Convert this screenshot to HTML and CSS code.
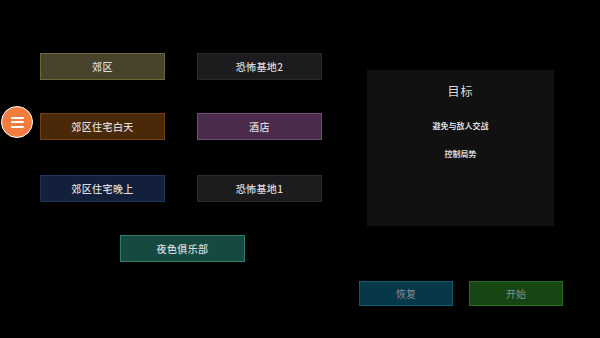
FILE: index.html
```html
<!DOCTYPE html>
<html>

<head>
    <title>选择地图</title>
    <link rel="stylesheet" href="styles.css">
</head>

<body>
    <div class="screen">
        <div class="menu-btn">
            <span></span><span></span><span></span>
        </div>

        <div class="maps">
            <div class="map-grid">
                <div class="map olive">郊区</div>
                <div class="map dark">恐怖基地2</div>
                <div class="map brown">郊区住宅白天</div>
                <div class="map purple">酒店</div>
                <div class="map navy">郊区住宅晚上</div>
                <div class="map dark">恐怖基地1</div>
            </div>
            <div class="map teal club">夜色俱乐部</div>
        </div>

        <div class="side">
            <div class="goal">
                <h3>目标</h3>
                <p>避免与敌人交战</p>
                <p>控制局势</p>
            </div>
            <div class="actions">
                <div class="action restore">恢复</div>
                <div class="action start">开始</div>
            </div>
        </div>
    </div>
</body>

</html>
```

FILE: styles.css
```css
html,
body {
    margin: 0;
    background: #000;
}

.screen {
    position: relative;
    width: 600px;
    height: 338px;
    display: flex;
    font-family: "Noto Sans CJK SC", "Noto Sans", sans-serif;
    color: #dcdcdc;
}

.menu-btn {
    position: absolute;
    left: 1px;
    top: 106px;
    width: 30px;
    height: 30px;
    border: 1.5px solid #fff;
    border-radius: 50%;
    background: #f27d3e;
    display: flex;
    flex-direction: column;
    align-items: center;
    justify-content: center;
    gap: 2.5px;
}

.menu-btn span {
    width: 13px;
    height: 2px;
    background: #fff;
    border-radius: 1px;
}

.maps {
    padding: 53px 0 0 40px;
    width: 283px;
}

.map-grid {
    display: grid;
    grid-template-columns: 125px 125px;
    column-gap: 32px;
    row-gap: 33px;
}

.map {
    box-sizing: border-box;
    height: 27px;
    display: flex;
    align-items: center;
    justify-content: center;
    font-size: 10px;
    font-weight: 500;
    letter-spacing: 0.4px;
    border: 1px solid;
}

.map-grid .map:nth-child(n+5) {
    margin-top: 2px;
}

.olive {
    background: #48432a;
    border-color: #6c6838;
}

.dark {
    background: #1c1b1d;
    border-color: #2a292c;
}

.brown {
    background: #4a2909;
    border-color: #73400f;
}

.purple {
    background: #4a2b4c;
    border-color: #744a78;
}

.navy {
    background: #12203b;
    border-color: #203457;
}

.teal {
    background: #164a40;
    border-color: #2b7e6b;
}

.club {
    width: 125px;
    margin: 33px 0 0 80px;
}

.side {
    margin-left: 36px;
    padding-top: 70px;
    display: flex;
    flex-direction: column;
}

.goal {
    margin-left: 8px;
    width: 187px;
    height: 156px;
    background: #111;
    text-align: center;
}

.goal h3 {
    margin: 12px 0 20px;
    font-size: 12px;
    font-weight: normal;
    letter-spacing: 1px;
}

.goal p {
    margin: 0 0 15px;
    font-size: 8px;
    font-weight: bold;
    line-height: 13px;
}

.actions {
    display: flex;
    gap: 16px;
    margin-top: 55px;
}

.action {
    box-sizing: border-box;
    width: 94px;
    height: 25px;
    display: flex;
    align-items: center;
    justify-content: center;
    font-size: 10px;
    color: #8f8f8f;
    border: 1px solid;
}

.restore {
    background: #06384a;
    border-color: #0f5d70;
}

.start {
    background: #164613;
    border-color: #2a6d22;
}
```
